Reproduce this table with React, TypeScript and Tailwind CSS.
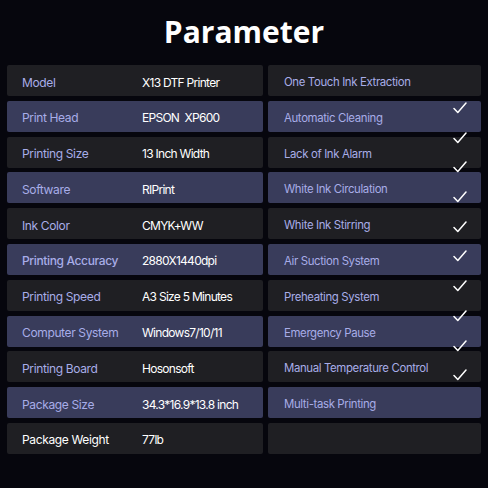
const rows: { label: string; value: string; feature: string; blue: boolean }[] = [
  { label: "Model", value: "X13 DTF Printer", feature: "One Touch Ink Extraction", blue: false },
  { label: "Print Head", value: "EPSON  XP600", feature: "Automatic Cleaning", blue: true },
  { label: "Printing Size", value: "13 Inch Width", feature: "Lack of Ink Alarm", blue: false },
  { label: "Software", value: "RIPrint", feature: "White Ink Circulation", blue: true },
  { label: "Ink Color", value: "CMYK+WW", feature: "White Ink Stirring", blue: false },
  { label: "Printing Accuracy", value: "2880X1440dpi", feature: "Air Suction System", blue: true },
  { label: "Printing Speed", value: "A3 Size 5 Minutes", feature: "Preheating System", blue: false },
  { label: "Computer System", value: "Windows7/10/11", feature: "Emergency Pause", blue: true },
  { label: "Printing Board", value: "Hosonsoft", feature: "Manual Temperature Control", blue: false },
  { label: "Package Size", value: "34.3*16.9*13.8 inch", feature: "Multi-task Printing", blue: true },
  { label: "Package Weight", value: "77lb", feature: "", blue: false },
];

const Check = () => (
  <svg width="14" height="12" viewBox="0 0 14 12" fill="none">
    <path d="M1 6.5 L4.8 10.5 L13 1" stroke="#ffffff" strokeWidth="1.5" strokeLinecap="round" strokeLinejoin="round" />
  </svg>
);

const App = () => {
  return (
    <div className="w-[488px] h-[488px] bg-[#06060d] overflow-hidden" style={{ fontFamily: "Inter, 'Liberation Sans', sans-serif" }}>
      <div className="h-[65px] flex items-center justify-center pb-[1px]">
        <h1 className="text-white text-[30px] font-bold leading-none" style={{ fontFamily: "'Open Sans', sans-serif" }}>
          Parameter
        </h1>
      </div>
      <div className="relative">
        <div className="flex flex-col gap-[4.8px] pl-[7px]">
          {rows.map((r, i) => {
            const bg = r.blue ? "bg-[#393c5b]" : "bg-[#1f1f23]";
            const last = i === rows.length - 1;
            // accuracy row is a touch heavier in the source
            const weight = r.label === "Printing Accuracy" ? "font-medium" : "";
            return (
              <div key={r.label} className="flex gap-[5px] h-[31px] text-[12px] tracking-[-0.03em]">
                <div className={`w-[256px] ${bg} rounded-[2px] flex items-center pt-[4px]`}>
                  <span className={`w-[135px] pl-[15px] ${weight} ${last ? "text-white" : "text-[#a8ade8]"}`}>{r.label}</span>
                  <span className="text-white whitespace-pre tracking-[-0.06em]">{r.value}</span>
                </div>
                <div className={`w-[213px] ${bg} rounded-[2px] flex items-center pt-[4px] pl-[16px] text-[#a8ade8] text-[11.4px]`}>
                  {r.feature}
                </div>
              </div>
            );
          })}
        </div>
        <div className="absolute left-[453px] top-[37px] flex flex-col gap-[17.7px]">
          {Array.from({ length: 10 }).map((_, i) => (
            <Check key={i} />
          ))}
        </div>
      </div>
    </div>
  );
};

export default App;
